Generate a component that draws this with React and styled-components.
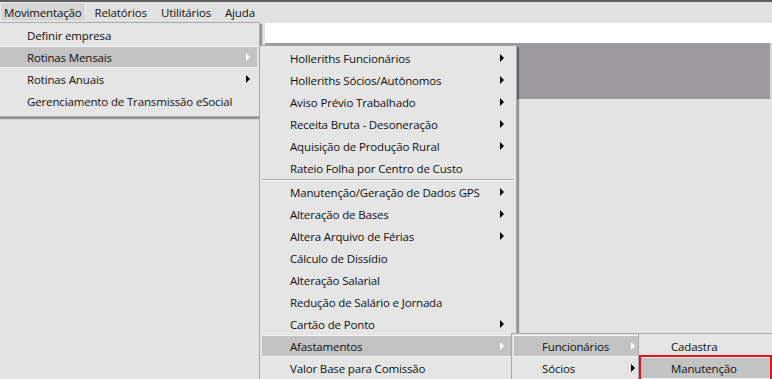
import styled, { createGlobalStyle } from "styled-components";

const GlobalStyle = createGlobalStyle`
  body {
    margin: 0;
    background: #e3e3e3;
    font-family: "Open Sans", "Noto Sans", sans-serif;
    font-size: 11.5px;
    letter-spacing: -0.15px;
    color: #111;
  }
`;

const Screen = styled.div`
  position: relative;
  width: 772px;
  height: 379px;
  overflow: hidden;
  background: #e3e3e3;
`;

const TopStrip = styled.div`
  height: 2px;
  background: #5e5e5e;
`;

const MenuBar = styled.nav`
  display: flex;
  height: 20px;
  align-items: stretch;
  background: #e1e1e1;
`;

const BarItem = styled.div`
  display: flex;
  align-items: center;
  padding: 0 ${(p) => (p.$active ? "4px" : "7px")};
  margin-right: ${(p) => (p.$active ? "2px" : "0")};
  background: ${(p) => (p.$active ? "#d6d6d6" : "transparent")};
  box-shadow: ${(p) => (p.$active ? "inset 0 0 0 1px #eeeeee" : "none")};
`;

const Workspace = styled.div`
  padding: 1px 0 0 265px;
`;

const WhiteBand = styled.div`
  height: 20px;
  background: #ffffff;
`;

const GrayBand = styled.div`
  height: 56px;
  background: #9c9a9f;
  border-right: 2px solid #d8d8d8;
`;

const Menu = styled.div`
  position: absolute;
  top: ${(p) => p.$top}px;
  left: ${(p) => p.$left}px;
  width: ${(p) => p.$width}px;
  padding: 1px 2px 4px;
  background: #e5e5e5;
  border: 1px solid #a7a7a7;
  box-shadow: 2px 2px 1px rgba(0, 0, 0, 0.35);
`;

const Item = styled.div`
  display: flex;
  align-items: center;
  height: 22px;
  box-sizing: border-box;
  padding-left: ${(p) => p.$indent}px;
  padding-right: ${(p) => p.$arrowGap}px;
  background: ${(p) => (p.$hot ? "#c3c3c3" : "transparent")};
  border-top: 1px solid ${(p) => (p.$hot ? "#f2f2f2" : "transparent")};
  border-bottom: 1px solid ${(p) => (p.$hot ? "#f2f2f2" : "transparent")};
  box-shadow: ${(p) => (p.$marked ? "0 0 0 2px #e5141b" : "none")};
  white-space: nowrap;
`;

const Label = styled.span`
  flex: 1;
`;

const Arrow = styled.span`
  width: 0;
  height: 0;
  border-top: 4px solid transparent;
  border-bottom: 4px solid transparent;
  border-left: 4px solid ${(p) => (p.$hot ? "#ffffff" : "#000000")};
`;

const Separator = styled.div`
  margin: 0 1px;
  border-top: 1px solid #a5a5a5;
  border-bottom: 1px solid #f7f7f7;
`;

const MenuItem = ({ label, sub, hot, marked, indent, arrowGap }) => (
  <Item $hot={hot} $marked={marked} $indent={indent} $arrowGap={arrowGap}>
    <Label>{label}</Label>
    {sub && <Arrow $hot={hot} />}
  </Item>
);

const level2 = [
  ["Holleriths Funcionários", true],
  ["Holleriths Sócios/Autônomos", true],
  ["Aviso Prévio Trabalhado", true],
  ["Receita Bruta - Desoneração", true],
  ["Aquisição de Produção Rural", true],
  ["Rateio Folha por Centro de Custo", false],
  "sep",
  ["Manutenção/Geração de Dados GPS", true],
  ["Alteração de Bases", true],
  ["Altera Arquivo de Férias", true],
  ["Cálculo de Dissídio", false],
  ["Alteração Salarial", false],
  ["Redução de Salário e Jornada", false],
  ["Cartão de Ponto", true],
  ["Afastamentos", true, true],
  ["Valor Base para Comissão", false],
];

export default function App() {
  return (
    <>
      <GlobalStyle />
      <Screen>
        <TopStrip />
        <MenuBar>
          <BarItem $active>Movimentação</BarItem>
          <BarItem>Relatórios</BarItem>
          <BarItem>Utilitários</BarItem>
          <BarItem>Ajuda</BarItem>
        </MenuBar>
        <Workspace>
          <WhiteBand />
          <GrayBand />
        </Workspace>

        <Menu $top={22} $left={-3} $width={257}>
          <MenuItem label="Definir empresa" indent={27} arrowGap={7} />
          <MenuItem label="Rotinas Mensais" sub hot indent={27} arrowGap={7} />
          <MenuItem label="Rotinas Anuais" sub indent={27} arrowGap={7} />
          <MenuItem
            label="Gerenciamento de Transmissão eSocial"
            indent={27}
            arrowGap={7}
          />
        </Menu>

        <Menu $top={45} $left={259} $width={252}>
          {level2.map((entry, i) =>
            entry === "sep" ? (
              <Separator key={i} />
            ) : (
              <MenuItem
                key={i}
                label={entry[0]}
                sub={entry[1]}
                hot={entry[2]}
                indent={28}
                arrowGap={10}
              />
            )
          )}
        </Menu>

        <Menu $top={333} $left={511} $width={124}>
          <MenuItem label="Funcionários" sub hot indent={28} arrowGap={3} />
          <MenuItem label="Sócios" sub indent={28} arrowGap={3} />
        </Menu>

        <Menu $top={333} $left={638} $width={129}>
          <MenuItem label="Cadastra" indent={30} arrowGap={4} />
          <MenuItem label="Manutenção" hot marked indent={30} arrowGap={4} />
        </Menu>
      </Screen>
    </>
  );
}
